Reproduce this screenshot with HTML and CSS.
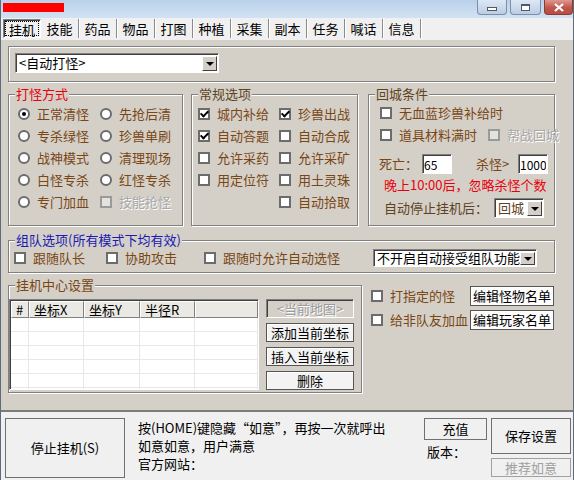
FILE: index.html
```html
<!DOCTYPE html>
<html lang="zh-CN">
<head>
    <meta charset="UTF-8">
    <title>挂机</title>
    <link rel="stylesheet" href="styles.css">
</head>
<body>
<div class="win">
    <div class="caption">
        <span class="app-mark"></span>
        <div class="capbtns">
            <span class="capbtn min"><i></i></span>
            <span class="capbtn max"><i></i></span>
            <span class="capbtn close">
                <svg width="12" height="9" viewBox="0 0 12 9"><path d="M2 1 L10 8 M10 1 L2 8" stroke="#fff" stroke-width="2.2" fill="none"/></svg>
            </span>
        </div>
    </div>

    <ul class="tabs">
        <li class="cur"><span>挂机</span></li>
        <li>技能</li>
        <li>药品</li>
        <li>物品</li>
        <li>打图</li>
        <li>种植</li>
        <li>采集</li>
        <li>副本</li>
        <li>任务</li>
        <li>喊话</li>
        <li>信息</li>
    </ul>

    <div class="page">
        <div class="frame top-frame">
            <div class="combo mode-combo"><span class="val">&lt;自动打怪&gt;</span><span class="drop"></span></div>
        </div>

        <div class="groups">
            <fieldset class="grp grp-mode">
                <legend class="t-red">打怪方式</legend>
                <div class="opts opts-mode">
                    <label class="opt"><i class="rd on"></i>正常清怪</label>
                    <label class="opt"><i class="rd"></i>先抢后清</label>
                    <label class="opt"><i class="rd"></i>专杀绿怪</label>
                    <label class="opt"><i class="rd"></i>珍兽单刷</label>
                    <label class="opt"><i class="rd"></i>战神模式</label>
                    <label class="opt"><i class="rd"></i>清理现场</label>
                    <label class="opt"><i class="rd"></i>白怪专杀</label>
                    <label class="opt"><i class="rd"></i>红怪专杀</label>
                    <label class="opt"><i class="rd"></i>专门加血</label>
                    <label class="opt off"><i class="cb"></i>技能抢怪</label>
                </div>
            </fieldset>

            <fieldset class="grp grp-common">
                <legend class="t-dark">常规选项</legend>
                <div class="opts opts-common">
                    <label class="opt"><i class="cb on"></i>城内补给</label>
                    <label class="opt"><i class="cb on"></i>珍兽出战</label>
                    <label class="opt"><i class="cb on"></i>自动答题</label>
                    <label class="opt"><i class="cb"></i>自动合成</label>
                    <label class="opt"><i class="cb"></i>允许采药</label>
                    <label class="opt"><i class="cb"></i>允许采矿</label>
                    <label class="opt"><i class="cb"></i>用定位符</label>
                    <label class="opt"><i class="cb"></i>用土灵珠</label>
                    <span></span>
                    <label class="opt"><i class="cb"></i>自动拾取</label>
                </div>
            </fieldset>

            <fieldset class="grp grp-back">
                <legend class="t-dark">回城条件</legend>
                <div class="back-body">
                    <label class="opt line"><i class="cb"></i>无血蓝珍兽补给时</label>
                    <div class="line">
                        <label class="opt"><i class="cb"></i>道具材料满时</label>
                        <label class="opt off help"><i class="cb"></i>帮战回城</label>
                    </div>
                    <div class="line limits">
                        <span class="lbl-die">死亡：</span>
                        <input class="num" type="text" value="65">
                        <span class="lbl-kill">杀怪&gt;</span>
                        <input class="num" type="text" value="1000">
                    </div>
                    <p class="t-red night">晚上10:00后，忽略杀怪个数</p>
                    <div class="line stop-line">
                        <span class="lbl-stop">自动停止挂机后：</span>
                        <div class="combo back-combo"><span class="val">回城</span><span class="drop"></span></div>
                    </div>
                </div>
            </fieldset>
        </div>

        <fieldset class="grp grp-team">
            <legend class="t-blue">组队选项(所有模式下均有效)</legend>
            <div class="team-row">
                <label class="opt w1"><i class="cb"></i>跟随队长</label>
                <label class="opt w2"><i class="cb"></i>协助攻击</label>
                <label class="opt w3"><i class="cb"></i>跟随时允许自动选怪</label>
                <div class="combo team-combo"><span class="val">不开启自动接受组队功能</span><span class="drop"></span></div>
            </div>
        </fieldset>

        <div class="center-row">
            <fieldset class="grp grp-center">
                <legend class="t-brown">挂机中心设置</legend>
                <div class="center-body">
                    <div class="listview">
                        <div class="lv-head">
                            <span class="c0">#</span>
                            <span class="c1">坐标X</span>
                            <span class="c2">坐标Y</span>
                            <span class="c3">半径R</span>
                            <span class="c4"></span>
                        </div>
                        <div class="lv-body">
                            <span class="c0"></span>
                            <span class="c1"></span>
                            <span class="c2"></span>
                            <span class="c3"></span>
                            <span class="c4"></span>
                        </div>
                    </div>
                    <div class="pos-btns">
                        <span class="btn map">&lt;当前地图&gt;</span>
                        <span class="btn">添加当前坐标</span>
                        <span class="btn">插入当前坐标</span>
                        <span class="btn">删除</span>
                    </div>
                </div>
            </fieldset>

            <div class="lists">
                <label class="opt"><i class="cb"></i>打指定的怪</label>
                <span class="btn white">编辑怪物名单</span>
                <label class="opt"><i class="cb"></i>给非队友加血</label>
                <span class="btn white">编辑玩家名单</span>
            </div>
        </div>
    </div>

    <div class="foot">
        <span class="btn stop">停止挂机(S)</span>
        <div class="notice">
            <p>按(HOME)键隐藏“如意”，再按一次就呼出</p>
            <p>如意如意，用户满意</p>
            <p>官方网站：</p>
        </div>
        <div class="col-pay">
            <span class="btn pay">充值</span>
            <p class="ver">版本：</p>
        </div>
        <div class="col-save">
            <span class="btn save">保存设置</span>
            <span class="btn rec">推荐如意</span>
        </div>
    </div>
</div>
</body>
</html>
```

FILE: styles.css
```css
*{box-sizing:border-box;}
html,body,ul,li,p,fieldset,legend{margin:0;padding:0;}
ul{list-style-type:none;}
body{font:13px/14px "Noto Sans CJK SC","Liberation Sans",sans-serif;color:#000;background:#fff;}

.win{width:574px;height:480px;overflow:hidden;background:#d4d0c8;border-left:1px solid #5d6b7c;border-right:1px solid #5d6b7c;}

/* caption */
.caption{height:18px;display:flex;justify-content:space-between;align-items:flex-start;background:linear-gradient(#bad1eb,#d2e2f3);}
.app-mark{display:block;width:61px;height:9px;margin:3px 0 0 2px;background:#f00;}
.capbtns{display:flex;gap:3px;}
.capbtn{display:flex;align-items:center;justify-content:center;width:30px;height:15px;border:1px solid #7d8ea6;border-top:0;border-radius:0 0 4px 4px;background:linear-gradient(#dde8f5,#bccde3);}
.capbtn i{display:block;border:1px solid #4d5a6c;background:#fff;}
.capbtn.min i{width:10px;height:4px;margin-top:4px;}
.capbtn.max{width:31px;}
.capbtn.max i{width:9px;height:7px;border-top-width:2px;}
.capbtn.close{width:29px;border-color:#8a3b33;background:linear-gradient(#e0988e,#c0564a 55%,#b84c40);}

/* tabs */
.tabs{display:flex;height:22px;padding:1px 0 0 2px;background:#f0f0f0;}
.tabs li{width:38px;height:19px;line-height:19px;text-align:center;border-right:1px solid #8a8a8a;box-shadow:1px 0 0 #fff;}
.tabs li.cur{border:1px solid;border-color:#808080 #fff #fff #808080;box-shadow:inset 1px 1px 0 #404040;line-height:17px;padding:1px;}
.tabs li.cur span{display:block;height:15px;line-height:15px;border:1px dotted #000;}

/* main page */
.page{height:370px;padding:6px 0 0 7px;}
.frame,.grp{border:1px solid #808080;box-shadow:1px 1px 0 #fff,inset 1px 1px 0 #fff;}
.grp{min-inline-size:0;}
.grp legend{margin-left:6px;padding:0 1px;line-height:14px;background:#d4d0c8;}
.t-red{color:#e8000c;}
.t-dark{color:#5e4322;}
.t-blue{color:#1a1ab4;}
.t-brown{color:#7a4614;}

.top-frame{width:547px;height:36px;padding:6px 0 0 6px;}

.combo{display:flex;background:#fff;border:1px solid;border-color:#808080 #fff #fff #808080;box-shadow:inset 1px 1px 0 #404040;}
.combo .val{flex:1;padding:1px 0 0 3px;white-space:nowrap;overflow:hidden;line-height:16px;}
.combo .drop{display:flex;align-items:center;justify-content:center;width:15px;margin:2px 1px 1px 0;background:#d4d0c8;border:1px solid;border-color:#fff #404040 #404040 #fff;}
.combo .drop::after{content:"";border:solid transparent;border-width:4px 4px 0;border-top-color:#000;}
.mode-combo{width:204px;height:20px;}

.groups{display:flex;margin-top:5px;}
.groups .grp{height:139px;}
.grp-mode{width:175px;}
.grp-common{width:167px;margin-left:8px;}
.grp-back{width:187px;margin-left:10px;}

.opts{display:grid;grid-auto-rows:22px;}
.opts-mode{grid-template-columns:82px auto;padding:2px 0 0 9px;}
.opts-common{grid-template-columns:81px auto;padding:2px 0 0 6px;}

.opt{display:flex;align-items:center;gap:7px;color:#7a4614;white-space:nowrap;}
.opt.off{color:#a8a8a8;text-shadow:1px 1px 0 #fff;}
.rd,.cb{display:inline-flex;align-items:center;justify-content:center;flex:none;width:12px;height:12px;border:2px solid #6c6c6c;background:#fff;}
.rd{border-radius:50%;}
.rd.on::after{content:"";width:4px;height:4px;border-radius:50%;background:#000;}
.cb.on::after{content:"";width:3px;height:6px;margin-top:-2px;border:solid #000;border-width:0 2px 2px 0;transform:rotate(45deg);}
.off .cb{background:#e4e2de;border-color:#9a9a9a;}

.back-body{padding:1px 0 0 11px;}
.back-body .line{display:flex;align-items:center;height:22px;}
.help{margin-left:11px;}
.limits{margin-top:8px;color:#7a4614;}
.back-body .limits{height:20px;}
.lbl-die{margin-left:-1px;width:43px;}
.lbl-kill{width:42px;margin-left:24px;}
.num{width:30px;height:20px;padding:0 1px;border:1px solid;border-color:#808080 #fff #fff #808080;box-shadow:inset 1px 1px 0 #404040;font:12px "Noto Sans CJK SC","Liberation Sans",sans-serif;color:#000;outline:none;}
.night{margin:4px 0 0 4px;height:14px;}
.back-body .stop-line{margin-top:6px;padding-left:4px;height:20px;color:#5e4322;}
.lbl-stop{width:110px;}
.back-combo{width:50px;height:20px;}

.grp-team{width:547px;height:40px;margin-top:7px;}
.team-row{display:flex;align-items:center;height:22px;padding-left:5px;}
.w1{width:92px;}
.w2{width:98px;}
.w3{width:169px;}
.team-combo{width:164px;height:18px;}
.team-combo .val{padding-top:0;}

.center-row{display:flex;align-items:flex-start;margin-top:5px;}
.grp-center{width:354px;height:115px;}
.center-body{display:flex;padding-top:7px;}
.listview{width:250px;height:91px;background:#fff;border:1px solid;border-color:#808080 #fff #fff #808080;box-shadow:inset 1px 1px 0 #404040;padding:1px 0 0 1px;overflow:hidden;}
.lv-head,.lv-body{display:flex;}
.lv-head span{height:17px;line-height:16px;padding-left:4px;background:#ebe9e4;border:1px solid;border-color:#fff #808080 #808080 #fff;}
.lv-body span{height:72px;border-right:1px solid #e8e8e8;background:repeating-linear-gradient(to bottom,#fff 0 13px,#e8e8e8 13px 14px);}
.c0{width:18px;}
.c1{width:55px;}
.c2{width:56px;}
.c3{width:55px;}
.c4{flex:1;}

.btn{display:flex;align-items:center;justify-content:center;white-space:nowrap;border:1px solid #555;background:#f3f3f3;box-shadow:inset 1px 1px 0 #fff;color:#000;}
.pos-btns{display:flex;flex-direction:column;gap:5px;width:88px;margin-left:7px;}
.pos-btns .btn{height:19px;}
.pos-btns .map{color:#9c9c9c;background:#d4d0c8;border-color:#808080 #fff #fff #808080;box-shadow:inset 1px 1px 0 #404040;text-shadow:1px 1px 0 #fff;}

.lists{display:grid;grid-template-columns:99px 84px;grid-auto-rows:20px;row-gap:4px;margin:8px 0 0 9px;}
.btn.white{background:#fdfdfd;}

/* bottom */
.foot{display:flex;height:70px;padding:6px 0 0 4px;background:#f0f0f0;border-top:2px solid #7c7c7c;}
.foot .btn{border-color:#707070;background:#f0f0f0;box-shadow:none;}
.stop{width:120px;height:60px;}
.notice{width:286px;margin:1px 0 0 13px;line-height:18px;}
.col-pay{width:63px;}
.pay{height:22px;}
.ver{margin-top:3px;padding-left:3px;line-height:18px;}
.col-save{display:flex;flex-direction:column;gap:4px;width:80px;margin-left:4px;}
.save{height:36px;}
.foot .rec{height:19px;color:#a0a0a0;border-color:#a0a0a0;}
```
